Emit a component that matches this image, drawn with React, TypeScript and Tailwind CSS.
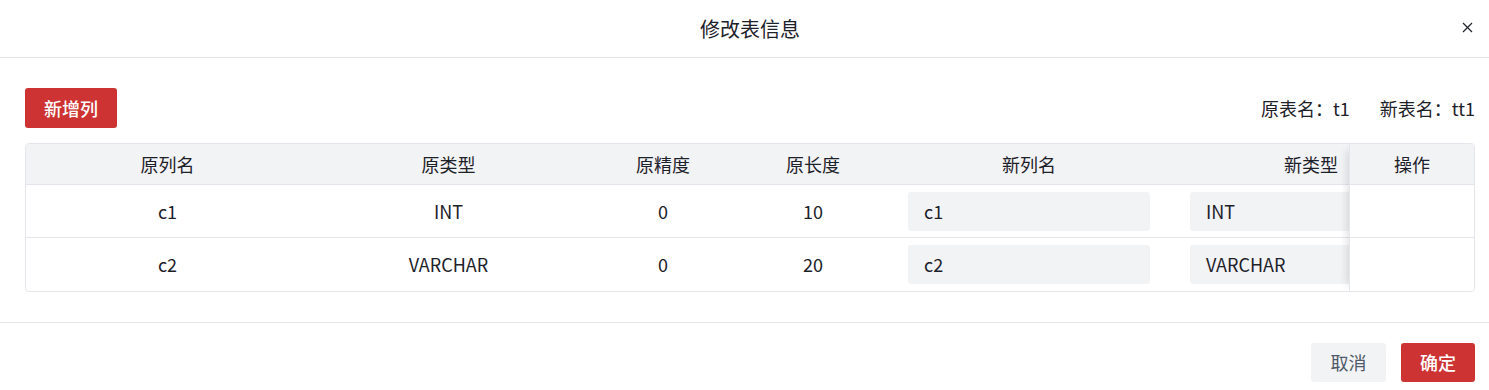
import React from "react";

const rows = [
  { name: "c1", type: "INT", prec: "0", len: "10" },
  { name: "c2", type: "VARCHAR", prec: "0", len: "20" },
];

export default function App() {
  return (
    <div
      className="w-[1489px] h-[390px] bg-white text-[#1d2129] overflow-hidden"
      style={{ fontFamily: '"Noto Sans CJK SC", "Noto Sans", sans-serif' }}
    >
      {/* header */}
      <div className="relative h-[58px] border-b border-[#e5e6eb] flex items-center justify-center pl-[11px]">
        <span className="text-[20px] leading-none">修改表信息</span>
        <button className="absolute right-[14px] top-[19px] w-[16px] h-[16px] flex items-center justify-center">
          <svg width="11" height="11" viewBox="0 0 11 11" fill="none" stroke="#1d2129" strokeWidth="1.2">
            <path d="M1 1 L10 10 M10 1 L1 10" />
          </svg>
        </button>
      </div>

      {/* body */}
      <div className="pl-[25px] pr-[14px] pt-[30px] pb-[30px] border-b border-[#e5e6eb]">
        <div className="flex items-center justify-between">
          <button className="h-[40px] w-[92px] rounded-[3px] bg-[#cd3333] text-white text-[18px] font-medium">
            新增列
          </button>
          <div className="flex items-center gap-[30px] text-[18px]">
            <span>原表名：t1</span>
            <span>新表名：tt1</span>
          </div>
        </div>

        <div className="mt-[15px] w-[1450px] border border-[#e5e6eb] rounded-[4px] overflow-hidden flex text-[18px]">
          {/* scrolling area */}
          <div className="w-[1323px] shrink-0 overflow-hidden">
            <div className="w-[1600px] flex flex-col">
              <div className="h-[41px] flex items-center bg-[#f2f3f5] border-b border-[#e5e6eb]">
                <div className="w-[283px] text-center">原列名</div>
                <div className="w-[279px] text-center">原类型</div>
                <div className="w-[150px] text-center">原精度</div>
                <div className="w-[150px] text-center">原长度</div>
                <div className="w-[282px] text-center">新列名</div>
                <div className="w-[282px] text-center">新类型</div>
              </div>
              {rows.map((r, i) => (
                <div
                  key={r.name}
                  className={`h-[53px] flex items-center ${i === 0 ? "border-b border-[#e5e6eb]" : ""}`}
                >
                  <div className="w-[283px] text-center">{r.name}</div>
                  <div className="w-[279px] text-center">{r.type}</div>
                  <div className="w-[150px] text-center">{r.prec}</div>
                  <div className="w-[150px] text-center">{r.len}</div>
                  <div className="w-[282px] px-[20px]">
                    <div className="h-[39px] rounded-[3px] bg-[#f2f3f5] flex items-center px-[16px]">{r.name}</div>
                  </div>
                  <div className="w-[282px] px-[20px]">
                    <div className="h-[39px] rounded-[3px] bg-[#f2f3f5] flex items-center px-[16px]">{r.type}</div>
                  </div>
                </div>
              ))}
            </div>
          </div>
          {/* fixed right column */}
          <div className="w-[125px] shrink-0 flex flex-col shadow-[-8px_0_8px_-6px_rgba(0,0,0,0.12)] border-l border-[#e5e6eb] relative bg-white">
            <div className="h-[41px] flex items-center justify-center bg-[#f2f3f5] border-b border-[#e5e6eb]">操作</div>
            <div className="h-[53px] border-b border-[#e5e6eb]"></div>
            <div className="h-[53px]"></div>
          </div>
        </div>
      </div>

      {/* footer */}
      <div className="flex justify-end gap-[15px] px-[14px] pt-[20px]">
        <button className="h-[39px] w-[75px] rounded-[3px] bg-[#f2f3f5] text-[#4e5969] text-[18px]">取消</button>
        <button className="h-[39px] w-[74px] rounded-[3px] bg-[#cd3333] text-white text-[18px] font-medium">确定</button>
      </div>
    </div>
  );
}
